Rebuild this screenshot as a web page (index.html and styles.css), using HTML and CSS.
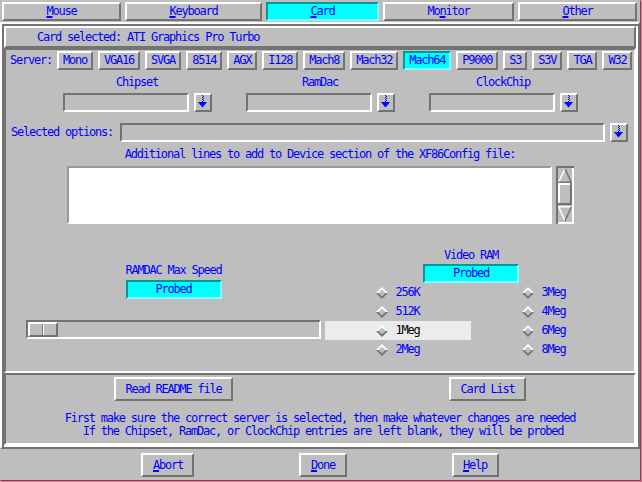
FILE: index.html
```html
<!DOCTYPE html>
<html>
<head>
<meta charset="utf-8">
<title>XF86Setup - Card</title>
<link rel="stylesheet" href="styles.css">
</head>
<body>
<div class="app">
  <div class="tabs">
    <button class="btn tab"><span class="ul">M</span>ouse</button>
    <button class="btn tab"><span class="ul">K</span>eyboard</button>
    <button class="btn tab on"><span class="ul">C</span>ard</button>
    <button class="btn tab">Mo<span class="ul">n</span>itor</button>
    <button class="btn tab"><span class="ul">O</span>ther</button>
  </div>

  <div class="main">
    <div class="cardsel">Card selected: ATI Graphics Pro Turbo</div>

    <div class="srvframe">
      <div class="srvrow">
        <span class="srvlbl">Server:</span>
        <button class="btn sb">Mono</button>
        <button class="btn sb">VGA16</button>
        <button class="btn sb">SVGA</button>
        <button class="btn sb">8514</button>
        <button class="btn sb">AGX</button>
        <button class="btn sb">I128</button>
        <button class="btn sb">Mach8</button>
        <button class="btn sb">Mach32</button>
        <button class="btn sb on">Mach64</button>
        <button class="btn sb">P9000</button>
        <button class="btn sb">S3</button>
        <button class="btn sb">S3V</button>
        <button class="btn sb">TGA</button>
        <button class="btn sb">W32</button>
      </div>

      <div class="combos">
        <div class="combo">
          <div class="clabel">Chipset</div>
          <div class="crow">
            <div class="entry centry"></div>
            <div class="btn arrowbtn"><svg width="14" height="15" viewBox="0 0 14 15"><path d="M6 0h1v1H6zM7 1h1v1H7zM6 2h1v1H6zM7 3h1v1H7zM6 4h1v1H6zM7 5h1v1H7zM6 6h1v1H6z" fill="#0000ff"/><polygon points="2,7 11,7 6.5,12.5" fill="#0000ff"/></svg></div>
          </div>
        </div>
        <div class="combo">
          <div class="clabel">RamDac</div>
          <div class="crow">
            <div class="entry centry"></div>
            <div class="btn arrowbtn"><svg width="14" height="15" viewBox="0 0 14 15"><path d="M6 0h1v1H6zM7 1h1v1H7zM6 2h1v1H6zM7 3h1v1H7zM6 4h1v1H6zM7 5h1v1H7zM6 6h1v1H6z" fill="#0000ff"/><polygon points="2,7 11,7 6.5,12.5" fill="#0000ff"/></svg></div>
          </div>
        </div>
        <div class="combo">
          <div class="clabel">ClockChip</div>
          <div class="crow">
            <div class="entry centry"></div>
            <div class="btn arrowbtn"><svg width="14" height="15" viewBox="0 0 14 15"><path d="M6 0h1v1H6zM7 1h1v1H7zM6 2h1v1H6zM7 3h1v1H7zM6 4h1v1H6zM7 5h1v1H7zM6 6h1v1H6z" fill="#0000ff"/><polygon points="2,7 11,7 6.5,12.5" fill="#0000ff"/></svg></div>
          </div>
        </div>
      </div>

      <div class="optrow">
        <span class="optlbl">Selected options:</span>
        <div class="entry oentry"></div>
        <div class="btn arrowbtn"><svg width="14" height="15" viewBox="0 0 14 15"><path d="M6 0h1v1H6zM7 1h1v1H7zM6 2h1v1H6zM7 3h1v1H7zM6 4h1v1H6zM7 5h1v1H7zM6 6h1v1H6z" fill="#0000ff"/><polygon points="2,7 11,7 6.5,12.5" fill="#0000ff"/></svg></div>
      </div>

      <div class="addl">Additional lines to add to Device section of the XF86Config file:</div>

      <div class="textrow">
        <div class="textbox"></div>
        <svg class="vscroll" width="18" height="58" viewBox="0 0 18 58">
          <rect width="18" height="58" fill="#bebebe"/>
          <rect x="0" y="0" width="18" height="2" fill="#737373"/>
          <rect x="0" y="0" width="2" height="58" fill="#737373"/>
          <rect x="2" y="56" width="16" height="2" fill="#ffffff"/>
          <rect x="16" y="2" width="2" height="56" fill="#ffffff"/>
          <line x1="9" y1="2.8" x2="2.8" y2="16" stroke="#ffffff" stroke-width="1.5"/>
          <line x1="9" y1="2.8" x2="15.2" y2="16" stroke="#737373" stroke-width="1.5"/>
          <line x1="2.5" y1="16.2" x2="15.5" y2="16.2" stroke="#737373" stroke-width="1.5"/>
          <rect x="2" y="17" width="14" height="2" fill="#ffffff"/>
          <rect x="2" y="17" width="2" height="22" fill="#ffffff"/>
          <rect x="2" y="37" width="14" height="2" fill="#737373"/>
          <rect x="14" y="17" width="2" height="22" fill="#737373"/>
          <line x1="2.5" y1="40.8" x2="15.5" y2="40.8" stroke="#ffffff" stroke-width="1.5"/>
          <line x1="2.8" y1="41" x2="9" y2="55" stroke="#ffffff" stroke-width="1.5"/>
          <line x1="15.2" y1="41" x2="9" y2="55" stroke="#737373" stroke-width="1.5"/>
        </svg>
      </div>

      <div class="speedrow">
        <div class="ramdac">
          <div class="slabel">RAMDAC Max Speed</div>
          <div class="probed probed-l">Probed</div>
          <div class="scale"><div class="knob"></div></div>
        </div>
        <div class="vram">
          <div class="slabel">Video RAM</div>
          <div class="probed probed-r">Probed</div>
          <div class="radios">
            <div class="radio"><svg width="12" height="12" viewBox="0 0 12 12"><polygon points="6,0 12,6 0,6" fill="#ffffff"/><polygon points="0,6 12,6 6,12" fill="#737373"/><polygon points="6,2.5 9.5,6 6,9.5 2.5,6" fill="#bebebe"/></svg><span>256K</span></div>
            <div class="radio"><svg width="12" height="12" viewBox="0 0 12 12"><polygon points="6,0 12,6 0,6" fill="#ffffff"/><polygon points="0,6 12,6 6,12" fill="#737373"/><polygon points="6,2.5 9.5,6 6,9.5 2.5,6" fill="#bebebe"/></svg><span>3Meg</span></div>
            <div class="radio"><svg width="12" height="12" viewBox="0 0 12 12"><polygon points="6,0 12,6 0,6" fill="#ffffff"/><polygon points="0,6 12,6 6,12" fill="#737373"/><polygon points="6,2.5 9.5,6 6,9.5 2.5,6" fill="#bebebe"/></svg><span>512K</span></div>
            <div class="radio"><svg width="12" height="12" viewBox="0 0 12 12"><polygon points="6,0 12,6 0,6" fill="#ffffff"/><polygon points="0,6 12,6 6,12" fill="#737373"/><polygon points="6,2.5 9.5,6 6,9.5 2.5,6" fill="#bebebe"/></svg><span>4Meg</span></div>
            <div class="radio active"><svg width="12" height="12" viewBox="0 0 12 12"><polygon points="6,0 12,6 0,6" fill="#ffffff"/><polygon points="0,6 12,6 6,12" fill="#737373"/><polygon points="6,2.5 9.5,6 6,9.5 2.5,6" fill="#bebebe"/></svg><span>1Meg</span></div>
            <div class="radio"><svg width="12" height="12" viewBox="0 0 12 12"><polygon points="6,0 12,6 0,6" fill="#ffffff"/><polygon points="0,6 12,6 6,12" fill="#737373"/><polygon points="6,2.5 9.5,6 6,9.5 2.5,6" fill="#bebebe"/></svg><span>6Meg</span></div>
            <div class="radio"><svg width="12" height="12" viewBox="0 0 12 12"><polygon points="6,0 12,6 0,6" fill="#ffffff"/><polygon points="0,6 12,6 6,12" fill="#737373"/><polygon points="6,2.5 9.5,6 6,9.5 2.5,6" fill="#bebebe"/></svg><span>2Meg</span></div>
            <div class="radio"><svg width="12" height="12" viewBox="0 0 12 12"><polygon points="6,0 12,6 0,6" fill="#ffffff"/><polygon points="0,6 12,6 6,12" fill="#737373"/><polygon points="6,2.5 9.5,6 6,9.5 2.5,6" fill="#bebebe"/></svg><span>8Meg</span></div>
          </div>
        </div>
      </div>
    </div>

    <div class="readme">
      <div class="rbrow">
        <div class="rcell"><button class="btn bigbtn">Read README file</button></div>
        <div class="rcell"><button class="btn bigbtn">Card List</button></div>
      </div>
      <div class="msg">First make sure the correct server is selected, then make whatever changes are needed
 If the Chipset, RamDac, or ClockChip entries are left blank, they will be probed</div>
    </div>
  </div>

  <div class="bottom">
    <button class="btn botbtn"><span class="ul">A</span>bort</button>
    <button class="btn botbtn"><span class="ul">D</span>one</button>
    <button class="btn botbtn"><span class="ul">H</span>elp</button>
  </div>
</div>
</body>
</html>
```

FILE: styles.css
```css
* {
  box-sizing: border-box;
}

html, body {
  margin: 0;
  padding: 0;
  background: #d97a94;
}

body {
  width: 642px;
  height: 482px;
  overflow: hidden;
  font-family: "DejaVu Sans Mono", "Liberation Mono", monospace;
  font-size: 12px;
  letter-spacing: -1.22px;
  line-height: 13px;
  color: #0000ff;
}

.app {
  width: 640px;
  height: 480px;
  background: #bebebe;
  box-shadow: 1px 1px 0 #8a3c52;
  display: flex;
  flex-direction: column;
}

/* generic Tk-like button */
.btn {
  font: inherit;
  letter-spacing: inherit;
  color: inherit;
  margin: 0;
  padding: 0;
  background: #bebebe;
  border: 2px solid;
  border-color: #ffffff #737373 #737373 #ffffff;
  text-align: center;
  white-space: nowrap;
}

.btn.on {
  background: #00ffff;
  border-color: #009999 #7fffff #7fffff #009999;
}

.ul {
  text-decoration: underline;
  text-decoration-thickness: 2px;
  text-underline-offset: 1px;
}

/* tab row */
.tabs {
  display: flex;
  gap: 4px;
  height: 21px;
  padding: 2px 3px 0 2px;
}

.tab {
  flex: 1 1 auto;
  height: 19px;
  line-height: 15px;
}

/* main ridge frame */
.main {
  margin-top: 1px;
  width: 640px;
  height: 427px;
  padding: 2px;
  border: 2px solid;
  border-color: #ffffff #737373 #737373 #ffffff;
  box-shadow: inset 2px 2px 0 #737373, inset -2px -2px 0 #ffffff;
  display: flex;
  flex-direction: column;
}

.cardsel {
  height: 22px;
  line-height: 18px;
  padding-left: 31px;
  white-space: nowrap;
  border: 2px solid;
  border-color: #ffffff #737373 #737373 #ffffff;
}

.srvframe {
  height: 325px;
  border: 2px solid;
  border-color: #737373 #ffffff #ffffff #737373;
  display: flex;
  flex-direction: column;
}

.srvrow {
  display: flex;
  align-items: center;
  gap: 5px;
  height: 20px;
  padding: 1px 0 0 4px;
}

.srvlbl {
  line-height: 19px;
  white-space: nowrap;
}

.sb {
  height: 19px;
  line-height: 15px;
  padding: 0 4px;
}

/* combos */
.combos {
  display: flex;
  justify-content: center;
  gap: 34px;
  margin-top: 6px;
}

.combo {
  width: 149px;
  display: flex;
  flex-direction: column;
}

.clabel {
  text-align: center;
  height: 13px;
  margin-bottom: 4px;
}

.crow {
  display: flex;
  gap: 5px;
}

.entry {
  height: 19px;
  flex-shrink: 0;
  background: #bebebe;
  border: 2px solid;
  border-color: #737373 #ffffff #ffffff #737373;
}

.centry {
  width: 126px;
}

.arrowbtn {
  width: 18px;
  height: 19px;
  flex-shrink: 0;
  display: flex;
}

.arrowbtn svg {
  display: block;
}

/* selected options */
.optrow {
  display: flex;
  align-items: center;
  margin-top: 11px;
  padding-left: 5px;
}

.optlbl {
  width: 109px;
  flex-shrink: 0;
  white-space: nowrap;
}

.oentry {
  width: 485px;
  margin-right: 5px;
}

.addl {
  height: 13px;
  margin-top: 6px;
  text-align: center;
  white-space: nowrap;
}

.textrow {
  display: flex;
  justify-content: center;
  gap: 4px;
  margin-top: 5px;
}

.textbox {
  width: 485px;
  height: 58px;
  background: #ffffff;
  border: 2px solid;
  border-color: #999999 #ffffff #ffffff #999999;
}

.vscroll {
  display: block;
}

/* speed / video ram */
.speedrow {
  display: flex;
  gap: 4px;
  margin-top: 25px;
  padding-left: 20px;
}

.ramdac {
  width: 295px;
  margin-top: 15px;
  display: flex;
  flex-direction: column;
  align-items: center;
}

.slabel {
  height: 13px;
  text-align: center;
  white-space: nowrap;
}

.probed {
  width: 96px;
  height: 19px;
  line-height: 15px;
  text-align: center;
  background: #00ffff;
  border: 2px solid;
  border-color: #009999 #7fffff #7fffff #009999;
}

.probed-l {
  margin-top: 3px;
}

.probed-r {
  margin-top: 2px;
}

.scale {
  width: 295px;
  height: 19px;
  margin-top: 21px;
  border: 2px solid;
  border-color: #737373 #ffffff #ffffff #737373;
}

.knob {
  width: 30px;
  height: 15px;
  border: 2px solid;
  border-color: #ffffff #737373 #737373 #ffffff;
  background: linear-gradient(to right, #bebebe 12px, #737373 12px, #737373 13px, #ffffff 13px, #ffffff 14px, #bebebe 14px);
}

.vram {
  width: 292px;
  display: flex;
  flex-direction: column;
  align-items: center;
}

.radios {
  display: grid;
  grid-template-columns: 146px 146px;
  width: 292px;
}

.radio {
  height: 19px;
  display: flex;
  align-items: center;
  justify-content: center;
  gap: 7px;
}

.radio svg {
  display: block;
}

.radio.active {
  background: #ececec;
  color: #000000;
}

/* readme frame */
.readme {
  height: 72px;
  padding-top: 2px;
  border: 2px solid;
  border-color: #737373 #ffffff #ffffff #737373;
}

.rbrow {
  display: flex;
  height: 24px;
}

.rcell {
  flex: 1 1 auto;
  display: flex;
  justify-content: center;
}

.bigbtn {
  height: 24px;
  line-height: 20px;
  padding: 0 9px;
}

.msg {
  margin-top: 11px;
  white-space: pre;
  text-align: center;
  line-height: 13px;
}

/* bottom buttons */
.bottom {
  display: flex;
  justify-content: center;
  gap: 105px;
  margin-top: 4px;
}

.botbtn {
  height: 24px;
  line-height: 20px;
  padding: 0 9.5px;
}
```
